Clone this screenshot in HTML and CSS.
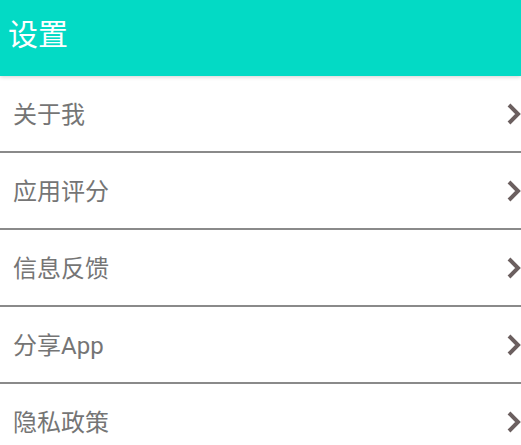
FILE: index.html
```html
<!DOCTYPE html>
<html lang="zh">
<head>
<meta charset="utf-8">
<link rel="stylesheet" href="styles.css">
</head>
<body>
<header class="appbar"><h1 class="title">设置</h1></header>
<ul class="list">
  <li class="row"><span class="label">关于我</span><svg class="chev" viewBox="0 0 14 22"><polyline points="2,2 11,11 2,20"/></svg></li>
  <li class="row"><span class="label">应用评分</span><svg class="chev" viewBox="0 0 14 22"><polyline points="2,2 11,11 2,20"/></svg></li>
  <li class="row"><span class="label">信息反馈</span><svg class="chev" viewBox="0 0 14 22"><polyline points="2,2 11,11 2,20"/></svg></li>
  <li class="row"><span class="label">分享App</span><svg class="chev" viewBox="0 0 14 22"><polyline points="2,2 11,11 2,20"/></svg></li>
  <li class="row"><span class="label">隐私政策</span><svg class="chev" viewBox="0 0 14 22"><polyline points="2,2 11,11 2,20"/></svg></li>
</ul>
</body>
</html>
```
FILE: styles.css
```css
html, body {
  margin: 0;
  padding: 0;
  background: #ffffff;
  font-family: Roboto, "Noto Sans CJK SC", sans-serif;
  overflow: hidden;
}
.appbar {
  height: 76px;
  background: #03dac5;
  display: flex;
  align-items: center;
  padding-left: 8px;
  box-shadow: 0 1px 4px rgba(0,0,0,0.18);
  position: relative;
  z-index: 1;
}
.title {
  margin: 0;
  color: #ffffff;
  font-size: 30px;
  font-weight: 400;
  line-height: 1;
  margin-top: -6px;
}
.list {
  list-style: none;
  margin: 0;
  padding: 0;
}
.row {
  height: 75px;
  border-bottom: 2px solid #8a8a8a;
  display: flex;
  align-items: center;
  justify-content: space-between;
  padding-left: 13px;
  padding-right: 0;
}
.label {
  color: #757575;
  font-size: 24px;
  line-height: 1;
  padding-top: 2px;
}
.chev {
  width: 14px;
  height: 22px;
  margin-right: 0;
}
.chev polyline {
  fill: none;
  stroke: #6b5f5f;
  stroke-width: 4;
}
```
